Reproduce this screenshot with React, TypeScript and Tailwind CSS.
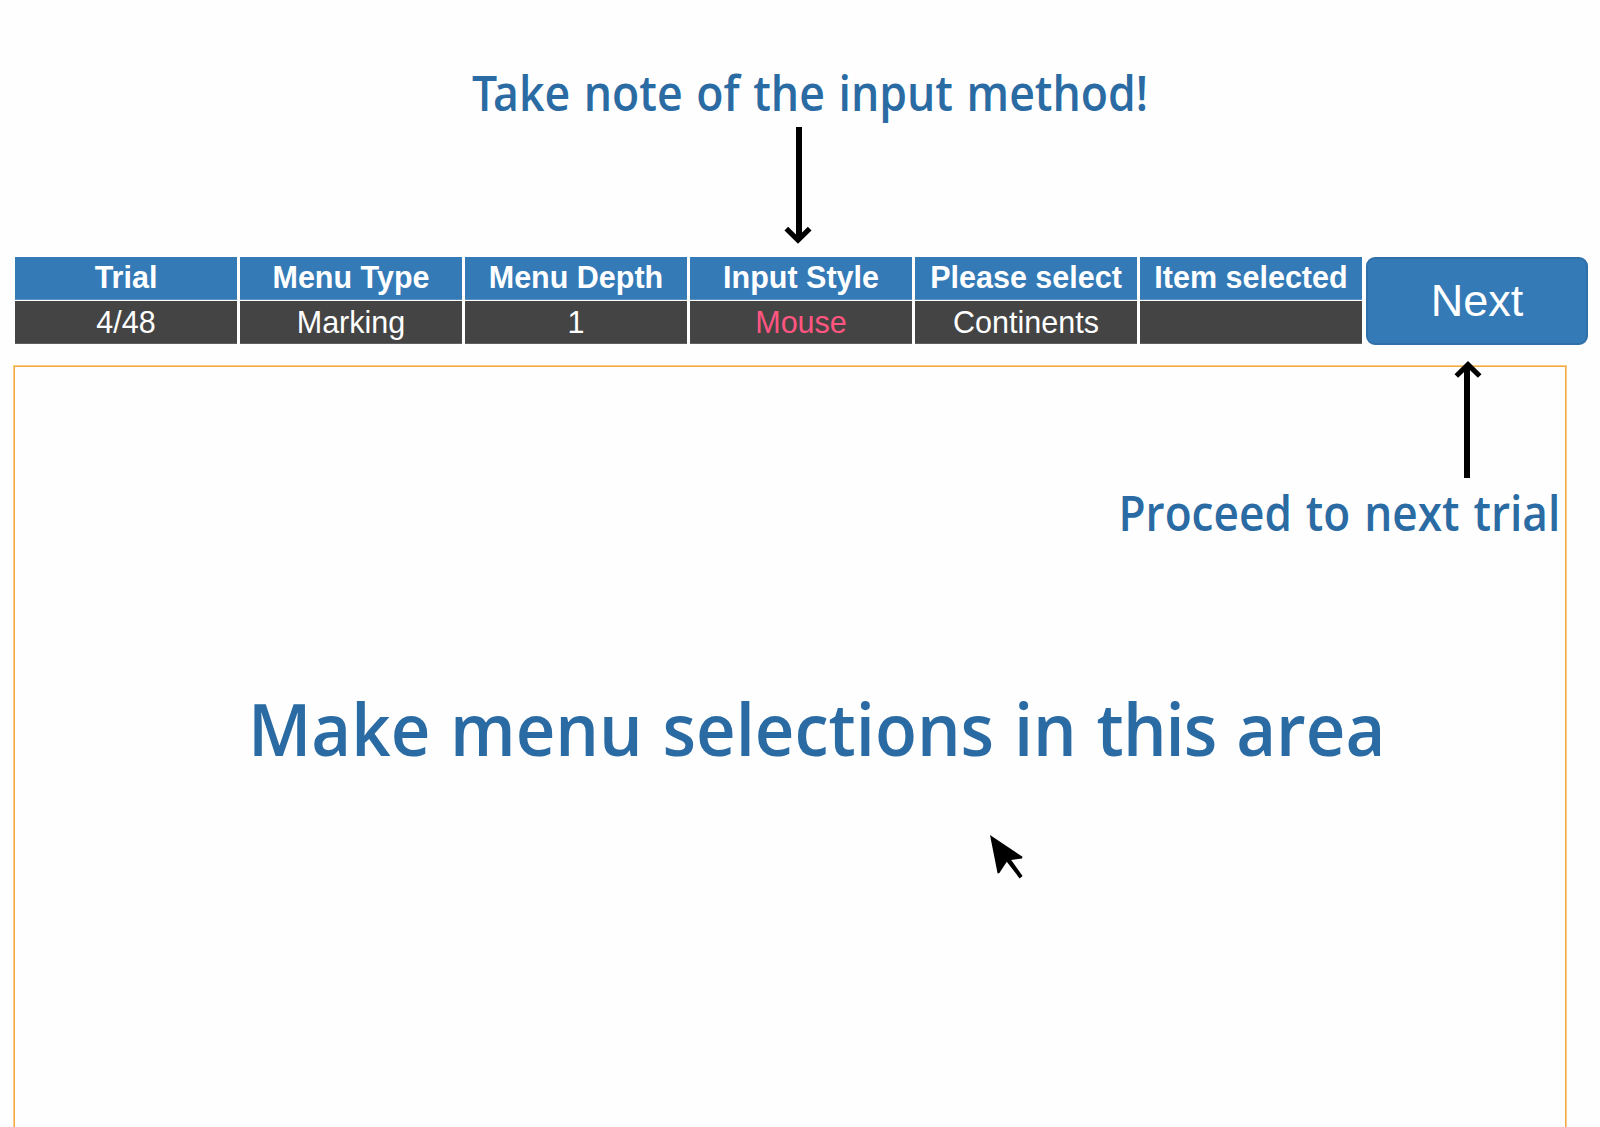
const columns = [
  { label: "Trial", value: "4/48" },
  { label: "Menu Type", value: "Marking" },
  { label: "Menu Depth", value: "1" },
  { label: "Input Style", value: "Mouse", highlight: true },
  { label: "Please select", value: "Continents" },
  { label: "Item selected", value: "" },
];

function DownArrow({ className }: { className: string }) {
  return (
    <svg className={className} width="28" height="118" viewBox="0 0 28 118" fill="none" stroke="#000">
      <path d="M15 0V112" strokeWidth="6" />
      <path d="M2.3 101.6L14 113L25.7 101.6" strokeWidth="5.2" />
    </svg>
  );
}

function UpArrow({ className }: { className: string }) {
  return (
    <svg className={className} width="28" height="118" viewBox="0 0 28 118" fill="none" stroke="#000">
      <path d="M13 118V6" strokeWidth="6" />
      <path d="M2.3 16L14 4.6L25.7 16" strokeWidth="5.2" />
    </svg>
  );
}

function Pointer({ className }: { className: string }) {
  return (
    <svg className={className} width="34" height="45" viewBox="0 0 34 45" fill="#000">
      <path d="M0 0L32.5 21.8L32 23.4L21.2 25L32.6 41L29.6 43.4L16.8 26.8L9.4 38L7.6 38.4Z" />
    </svg>
  );
}

export default function App() {
  return (
    <div className="relative flex h-[1127px] w-[1600px] flex-col overflow-hidden bg-[#fefefe] font-['Liberation_Sans',Arial,sans-serif]">
      <header className="relative h-[257px] shrink-0 pt-[60px] pl-[472px]">
        <h1 className="w-max origin-left scale-x-[0.929] font-['Open_Sans','Segoe_UI',sans-serif] text-[48px] leading-[65px] font-semibold [word-spacing:2.2px] whitespace-nowrap text-[#2a6ba4]">
          <span className="tracking-[-4.5px]">T</span>ake note of the input method!
        </h1>
        <DownArrow className="absolute top-[127px] left-[784px]" />
      </header>

      <div className="flex shrink-0 gap-[3px] pl-[15px]">
        {columns.map((c) => (
          <div key={c.label} className="flex w-[222px] flex-col gap-px text-center text-[30.5px] whitespace-nowrap text-white">
            <div className="h-[43px] border-b border-[#5792c6] bg-[#337ab7] leading-[41px] font-bold">{c.label}</div>
            <div
              className={
                c.highlight
                  ? "h-[43px] border-b border-[#606060] bg-[#444] leading-[43px] text-[#ff5580]"
                  : "h-[43px] border-b border-[#606060] bg-[#444] leading-[43px]"
              }
            >
              {c.value}
            </div>
          </div>
        ))}
        <button className="ml-px h-[88px] w-[222px] rounded-[9px] border-2 border-[#2f70a9] bg-[#337ab7] text-[45px] leading-[82px] text-white">
          Next
        </button>
      </div>

      <main className="relative mt-5 ml-[13px] h-[800px] w-[1554px] shrink-0 border border-[#fbca83] inset-ring inset-ring-[#f5aa41]">
        <UpArrow className="absolute top-[-6px] left-[1440px]" />
        <p className="mt-[114px] mr-[6px] ml-auto w-max origin-right scale-x-[0.92] font-['Open_Sans','Segoe_UI',sans-serif] text-[48px] leading-[65px] font-semibold [word-spacing:2.7px] whitespace-nowrap text-[#2a6ba4]">
          Proceed to next trial
        </p>
        <p className="mt-[133px] ml-[234px] w-max origin-left scale-x-[0.942] font-['Open_Sans','Segoe_UI',sans-serif] text-[73px] leading-[100px] font-semibold [word-spacing:2.1px] whitespace-nowrap text-[#2a6ba4]">
          Make menu selections in <span className="tracking-[-1px]">this</span> area
        </p>
        <Pointer className="absolute top-[469px] left-[976px]" />
      </main>
    </div>
  );
}
